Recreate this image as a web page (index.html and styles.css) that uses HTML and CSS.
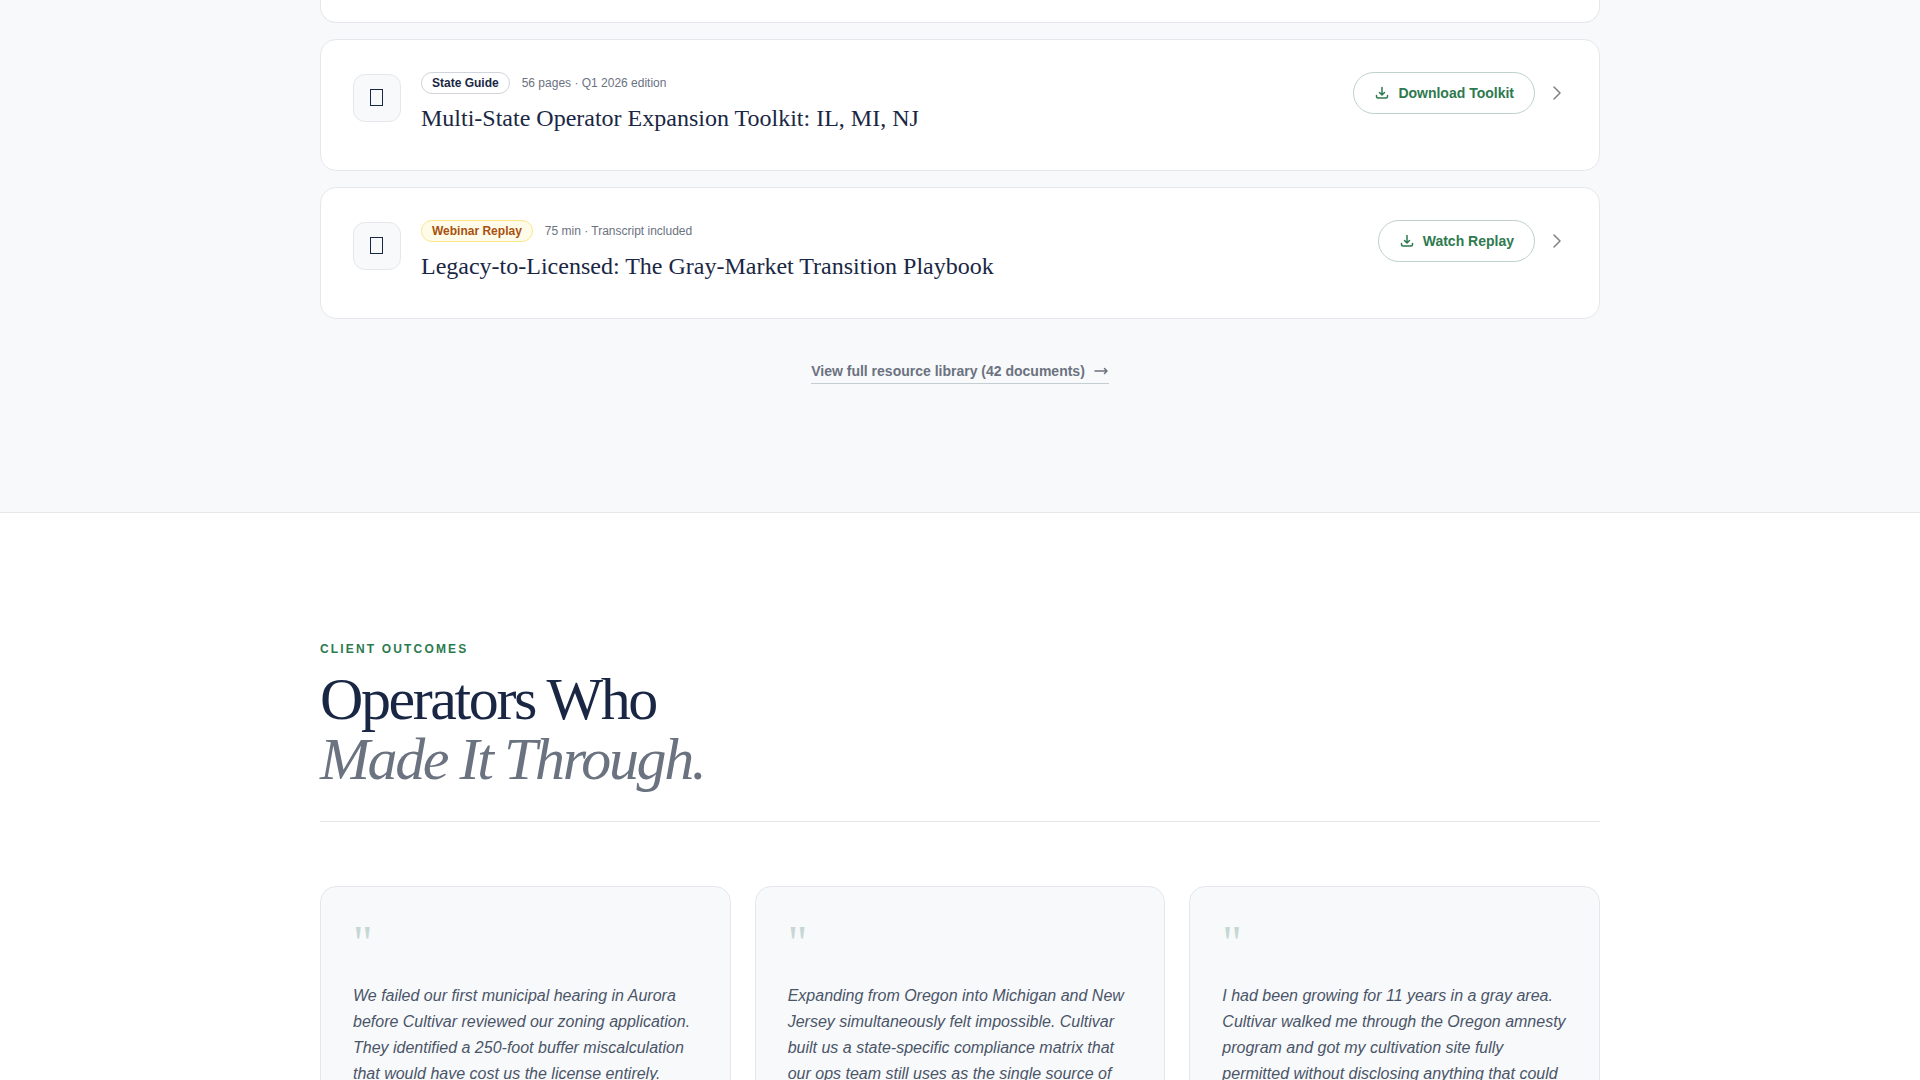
FILE: index.html
```html
<!DOCTYPE html>
<html lang="en">
<head>
<meta charset="utf-8">
<meta name="viewport" content="width=device-width, initial-scale=1">
<title>Cultivar</title>
<link rel="stylesheet" href="styles.css">
</head>
<body>
<section class="resources">
  <div class="container">
    <div class="resource-list">
      <div class="resource resource-cut"></div>
      <article class="resource">
        <div class="resource-icon"><svg width="14" height="18" viewBox="0 0 14 18" aria-hidden="true"><rect x=".5" y=".5" width="12" height="16"/></svg></div>
        <div class="resource-body">
          <div class="meta"><span class="badge">State Guide</span><span class="detail">56 pages · Q1 2026 edition</span></div>
          <h3 class="resource-title">Multi-State Operator Expansion Toolkit: IL, MI, NJ</h3>
        </div>
        <div class="actions">
          <button class="download" type="button"><svg class="icon" width="16" height="16" viewBox="0 0 16 16" aria-hidden="true"><path d="M8 2.500v7M5.500 7.500l2.500 2.500 2.500-2.500M2.500 10.500v1a1.500 1.500 0 0 0 1.500 1.500h8a1.500 1.500 0 0 0 1.500-1.500v-1"/></svg>Download Toolkit</button>
          <svg class="icon chevron" width="20" height="20" viewBox="0 0 20 20" aria-hidden="true"><path d="M7 4l6 6-6 6"/></svg>
        </div>
      </article>
      <article class="resource">
        <div class="resource-icon"><svg width="14" height="18" viewBox="0 0 14 18" aria-hidden="true"><rect x=".5" y=".5" width="12" height="16"/></svg></div>
        <div class="resource-body">
          <div class="meta"><span class="badge badge-webinar">Webinar Replay</span><span class="detail">75 min · Transcript included</span></div>
          <h3 class="resource-title">Legacy-to-Licensed: The Gray-Market Transition Playbook</h3>
        </div>
        <div class="actions">
          <button class="download" type="button"><svg class="icon" width="16" height="16" viewBox="0 0 16 16" aria-hidden="true"><path d="M8 2.500v7M5.500 7.500l2.500 2.500 2.500-2.500M2.500 10.500v1a1.500 1.500 0 0 0 1.500 1.500h8a1.500 1.500 0 0 0 1.500-1.500v-1"/></svg>Watch Replay</button>
          <svg class="icon chevron" width="20" height="20" viewBox="0 0 20 20" aria-hidden="true"><path d="M7 4l6 6-6 6"/></svg>
        </div>
      </article>
    </div>
    <div class="library">
      <a class="library-link" href="#library">View full resource library (42 documents)<svg class="icon" width="16" height="16" viewBox="0 0 16 16" aria-hidden="true"><path d="M2 8h12M11.500 5.500l2.500 2.500-2.500 2.500"/></svg></a>
    </div>
  </div>
</section>
<section class="outcomes">
  <div class="container">
    <header class="outcomes-head">
      <p class="eyebrow">CLIENT OUTCOMES</p>
      <h2 class="headline">Operators Who<br><em>Made It Through.</em></h2>
    </header>
    <div class="quotes">
      <figure class="quote">
        <div class="mark" aria-hidden="true">"</div>
        <blockquote>We failed our first municipal hearing in Aurora before Cultivar reviewed our zoning application. They identified a 250-foot buffer miscalculation that would have cost us the license entirely.</blockquote>
      </figure>
      <figure class="quote">
        <div class="mark" aria-hidden="true">"</div>
        <blockquote>Expanding from Oregon into Michigan and New Jersey simultaneously felt impossible. Cultivar built us a state-specific compliance matrix that our ops team still uses as the single source of</blockquote>
      </figure>
      <figure class="quote">
        <div class="mark" aria-hidden="true">"</div>
        <blockquote>I had been growing for 11 years in a gray area. Cultivar walked me through the Oregon amnesty program and got my cultivation site fully permitted without disclosing anything that could</blockquote>
      </figure>
    </div>
  </div>
</section>
</body>
</html>
```
FILE: styles.css
```css
*, *::before, *::after { box-sizing: border-box; }

body {
  margin: 0;
  background: #fff;
  color: #1a2744;
  font-family: "Liberation Sans", Arial, sans-serif;
}

h2, h3, p, figure, blockquote { margin: 0; }

.container {
  max-width: 1280px;
  margin: 0 auto;
}

.icon {
  flex: none;
  fill: none;
  stroke: currentColor;
  stroke-width: 1.5;
  stroke-linecap: round;
  stroke-linejoin: round;
}

/* Resource library */
.resources {
  padding-bottom: 128px;
  background: #f8f9fb;
  border-bottom: 1px solid #e5e7eb;
}

.resource-list {
  display: grid;
  gap: 16px;
}

.resource {
  display: flex;
  align-items: flex-start;
  gap: 20px;
  padding: 32px;
  background: #fff;
  border: 1px solid #e5e7eb;
  border-radius: 16px;
}

.resource-cut {
  padding: 22px 0 0;
  border-top: 0;
  border-radius: 0 0 16px 16px;
}

.resource-icon {
  display: grid;
  place-items: center;
  flex: none;
  width: 48px;
  height: 48px;
  margin-top: 2px;
  background: #f8f9fb;
  border: 1px solid #e5e7eb;
  border-radius: 12px;
}

.resource-icon rect {
  fill: none;
  stroke: #1a2744;
}

.resource-body {
  flex: 1;
  min-height: 66px;
}

.meta {
  display: flex;
  align-items: center;
  gap: 12px;
  margin-bottom: 8px;
  font-size: 12px;
  line-height: 16px;
}

.badge {
  padding: 2px 10px;
  border: 1px solid #d1d5db;
  border-radius: 11px;
  font-weight: 700;
}

.badge-webinar {
  background: #fefce8;
  border-color: #fde68a;
  color: #a8500f;
}

.detail { color: #6b7280; }

.resource-title {
  font: 400 24px/32px "Liberation Serif", "Times New Roman", serif;
}

.actions {
  display: flex;
  align-items: center;
  gap: 12px;
}

.download {
  display: flex;
  align-items: center;
  gap: 8px;
  padding: 10px 20px;
  background: #fff;
  border: 1px solid #bfd1cf;
  border-radius: 21px;
  color: #2d7a4f;
  font: 700 14px/20px "Liberation Sans", Arial, sans-serif;
}

.chevron { color: #808080; }

.library {
  display: flex;
  justify-content: center;
  margin-top: 40px;
}

.library-link {
  display: flex;
  align-items: center;
  gap: 8px;
  padding: 2px 0;
  border-bottom: 1px solid #c4cfd4;
  color: #6b7280;
  font-size: 14px;
  font-weight: 700;
  line-height: 20px;
  text-decoration: none;
}

/* Client outcomes */
.outcomes { padding: 128px 0; }

.outcomes-head {
  padding-bottom: 32px;
  border-bottom: 1px solid #e5e7eb;
}

.eyebrow {
  margin-bottom: 12px;
  color: #2d7a4f;
  font-size: 12px;
  font-weight: 700;
  line-height: 16px;
  letter-spacing: 0.18em;
}

.headline {
  font: 400 60px/60px "Liberation Serif", "Times New Roman", serif;
  letter-spacing: -0.04em;
}

.headline em { color: #6b7280; }

.quotes {
  display: grid;
  grid-template-columns: repeat(3, 1fr);
  gap: 24px;
  margin-top: 64px;
}

.quote {
  padding: 32px;
  background: #f8f9fb;
  border: 1px solid #e5e7eb;
  border-radius: 16px;
}

.mark {
  margin-bottom: 16px;
  color: #c5d8d4;
  font: 400 48px/48px "Liberation Serif", "Times New Roman", serif;
}

.quote blockquote {
  color: #4a5568;
  font-size: 16px;
  font-style: italic;
  line-height: 26px;
}
```
